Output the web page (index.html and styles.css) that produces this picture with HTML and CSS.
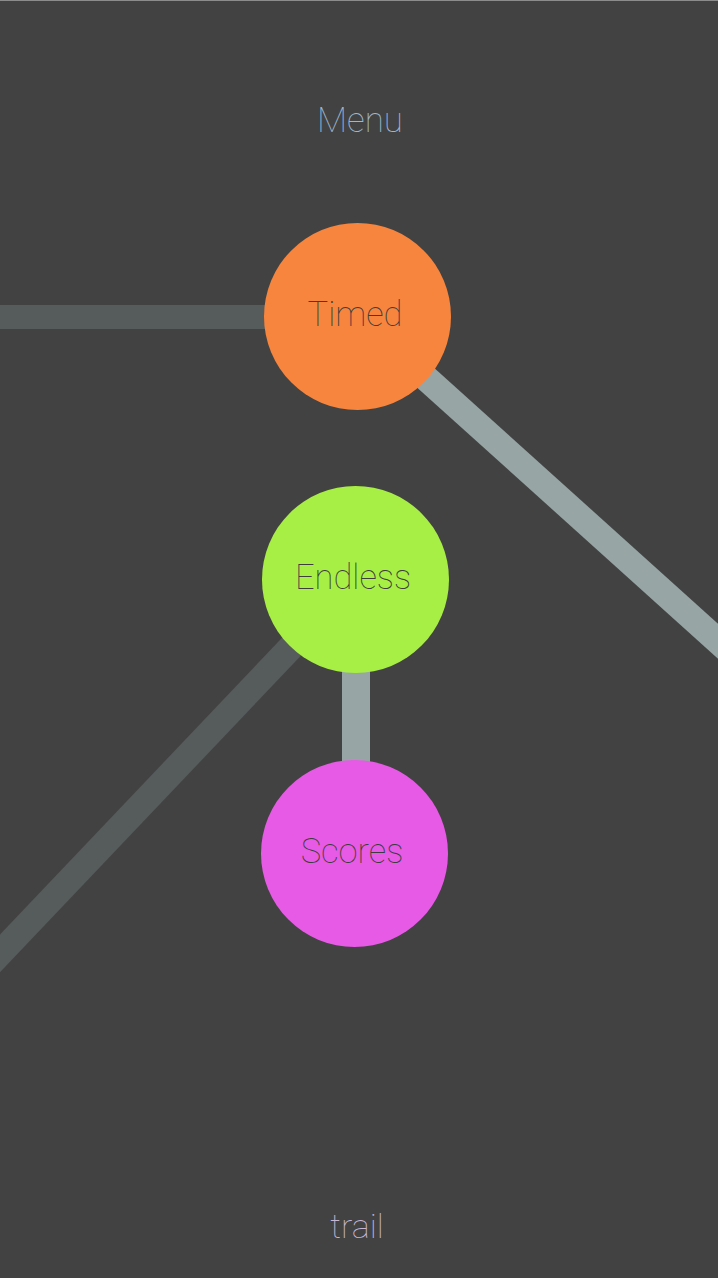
FILE: index.html
```html
<!DOCTYPE html>
<html>
<head>
<meta charset="utf-8">
<link rel="stylesheet" href="styles.css">
</head>
<body>
<div class="screen">
  <svg class="links" width="718" height="1277" viewBox="0 1 718 1277">
    <line class="link dim" x1="-10" y1="317" x2="357" y2="317" stroke-width="24"/>
    <line class="link light" x1="357" y1="316" x2="760" y2="679" stroke-width="26"/>
    <line class="link dim" x1="355" y1="580" x2="-50" y2="1006" stroke-width="26"/>
    <line class="link light" x1="356" y1="580" x2="356" y2="853" stroke-width="28"/>
  </svg>
  <header class="title">Menu</header>
  <div class="node timed">Timed</div>
  <div class="node endless">Endless</div>
  <div class="node scores">Scores</div>
  <footer class="brand">trail</footer>
</div>
</body>
</html>
```

FILE: styles.css
```css
html, body {
  margin: 0;
  padding: 0;
  background: #424242;
}
.screen {
  position: relative;
  width: 718px;
  height: 1277px;
  border-top: 1px solid #8c8c8c;
  background: #424242;
  display: flex;
  flex-direction: column;
  align-items: center;
  justify-content: space-between;
  overflow: hidden;
  font-family: Roboto, "Noto Sans", sans-serif;
  font-weight: 100;
}
.links {
  position: absolute;
  left: 0;
  top: 0;
}
.link.dim { stroke: #565b5c; }
.link.light { stroke: #97a5a5; }
.title {
  position: relative;
  padding-top: 100px;
  font-size: 35px;
  line-height: 1.17;
  color: #9db6cf;
  padding-left: 2px;
}
.brand {
  position: relative;
  padding-bottom: 31px;
  padding-right: 4px;
  font-size: 34px;
  line-height: 1.17;
  color: #c6b6d4;
}
.node {
  position: absolute;
  width: 187px;
  height: 187px;
  box-sizing: border-box;
  padding: 0 5px 5px 0;
  border-radius: 50%;
  display: flex;
  align-items: center;
  justify-content: center;
  font-size: 34.5px;
  color: #3d3d3d;
  line-height: 1;
}
.timed { left: 264px; top: 222px; background: #f7853e; }
.endless { left: 262px; top: 485px; background: #a8ef45; }
.scores { left: 261px; top: 759px; background: #e75ae5; }
```
